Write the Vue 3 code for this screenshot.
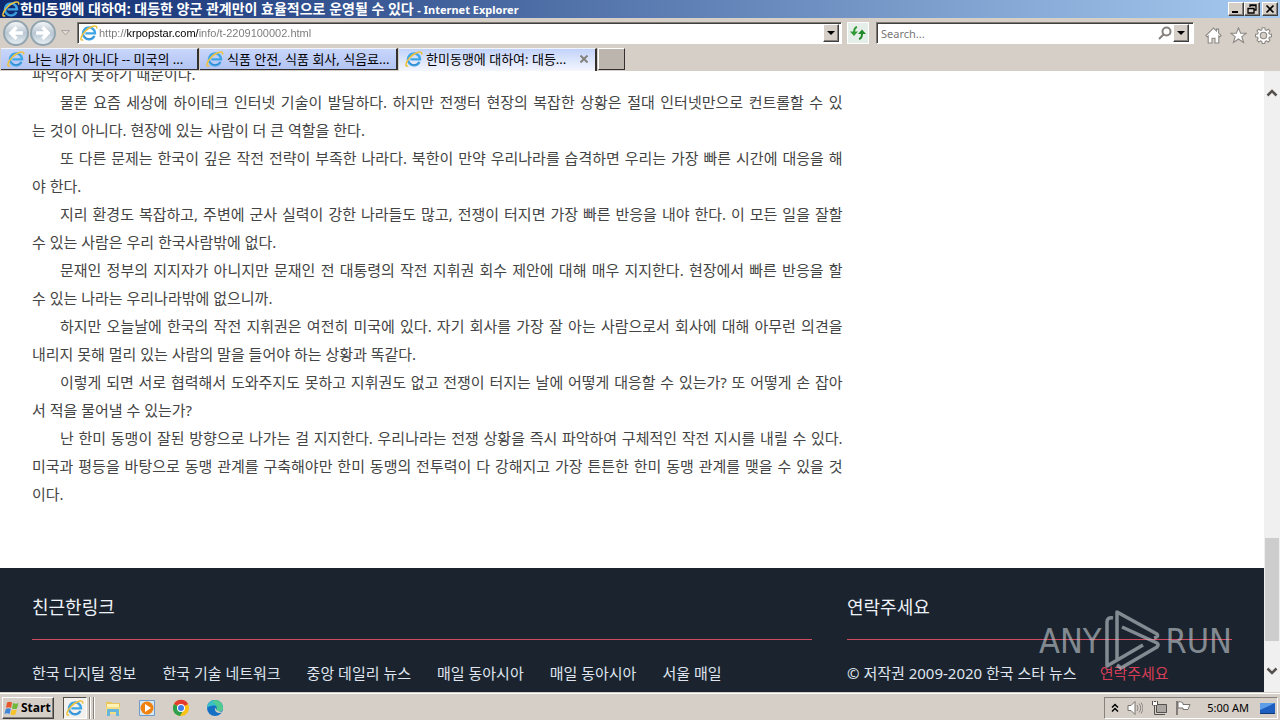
<script setup>
import { ref } from 'vue'

const address = ref('http://krpopstar.com/info/t-2209100002.html')
const query = ref('')

const tabs = [
  { label: '나는 내가 아니다 -- 미국의 ...', active: false },
  { label: '식품 안전, 식품 회사, 식음료...', active: false },
  { label: '한미동맹에 대하여: 대등...', active: true },
]

const paragraphs = [
  ['물론 요즘 세상에 하이테크 인터넷 기술이 발달하다. 하지만 전쟁터 현장의 복잡한 상황은 절대 인터넷만으로 컨트롤할 수 있', '는 것이 아니다. 현장에 있는 사람이 더 큰 역할을 한다.'],
  ['또 다른 문제는 한국이 깊은 작전 전략이 부족한 나라다. 북한이 만약 우리나라를 습격하면 우리는 가장 빠른 시간에 대응을 해', '야 한다.'],
  ['지리 환경도 복잡하고, 주변에 군사 실력이 강한 나라들도 많고, 전쟁이 터지면 가장 빠른 반응을 내야 한다. 이 모든 일을 잘할', '수 있는 사람은 우리 한국사람밖에 없다.'],
  ['문재인 정부의 지지자가 아니지만 문재인 전 대통령의 작전 지휘권 회수 제안에 대해 매우 지지한다. 현장에서 빠른 반응을 할', '수 있는 나라는 우리나라밖에 없으니까.'],
  ['하지만 오늘날에 한국의 작전 지휘권은 여전히 미국에 있다. 자기 회사를 가장 잘 아는 사람으로서 회사에 대해 아무런 의견을', '내리지 못해 멀리 있는 사람의 말을 들어야 하는 상황과 똑같다.'],
  ['이렇게 되면 서로 협력해서 도와주지도 못하고 지휘권도 없고 전쟁이 터지는 날에 어떻게 대응할 수 있는가? 또 어떻게 손 잡아', '서 적을 물어낼 수 있는가?'],
  ['난 한미 동맹이 잘된 방향으로 나가는 걸 지지한다. 우리나라는 전쟁 상황을 즉시 파악하여 구체적인 작전 지시를 내릴 수 있다.', '미국과 평등을 바탕으로 동맹 관계를 구축해야만 한미 동맹의 전투력이 다 강해지고 가장 튼튼한 한미 동맹 관계를 맺을 수 있을 것', '이다.'],
]

const links = ['한국 디지털 정보', '한국 기술 네트워크', '중앙 데일리 뉴스', '매일 동아시아', '매일 동아시아', '서울 매일']
</script>

<template>
  <div class="screen">
    <svg class="defs" aria-hidden="true">
      <symbol id="ie" viewBox="0 0 18 18">
        <path d="M14.400 12A6 6 0 1 1 15 9.400H5.400" fill="none" stroke="#3fa6e6" stroke-width="2.400" />
        <path d="M14.300 11.800A5.700 5.700 0 0 1 4 11.500" fill="none" stroke="#2f7cc4" stroke-width=".8" />
        <path d="M3.200 15.800C-.6 17.400.6 12 5 7.400S17.800-.8 16.600 4.600" fill="none" stroke="#eec23e" stroke-width="1.500" />
      </symbol>
    </svg>

    <header class="titlebar">
      <svg class="ie"><use href="#ie" /></svg>
      <h1>한미동맹에 대하여: 대등한 양군 관계만이 효율적으로 운영될 수 있다 <span>- Internet Explorer</span></h1>
      <div class="winbtns">
        <button aria-label="Minimize"><svg viewBox="0 0 12 10"><path d="M2 8h6" stroke="#000" stroke-width="2" /></svg></button>
        <button aria-label="Restore"><svg viewBox="0 0 12 10"><path d="M4 3V1h6v5H8M4 1.500h6M2 4.500h6V9H2zM2 4.500h6" fill="none" stroke="#000" stroke-width="1.300" /></svg></button>
        <button class="close" aria-label="Close"><svg viewBox="0 0 12 10"><path d="M2.500 1.500l7 7M9.500 1.500l-7 7" stroke="#000" stroke-width="1.700" /></svg></button>
      </div>
    </header>

    <nav class="navbar">
      <div class="history">
        <button aria-label="Back"><svg viewBox="0 0 14 14"><path d="M13 7H3M7.500 2L2.500 7l5 5" /></svg></button>
        <button aria-label="Forward"><svg viewBox="0 0 14 14"><path d="M1 7h10M6.500 2l5 5-5 5" /></svg></button>
        <svg class="recent" viewBox="0 0 9 6"><path d="M.5.5h8l-4 4.500z" fill="#ded9d4" stroke="#aaa5a0" /></svg>
      </div>
      <div class="field address">
        <svg class="ie"><use href="#ie" /></svg>
        <input v-model="address" aria-label="Address" spellcheck="false">
        <button class="drop" aria-label="Show address list"><svg viewBox="0 0 8 4"><path d="M0 0h8L4 4z" /></svg></button>
      </div>
      <button class="refresh" aria-label="Refresh">
        <svg viewBox="0 0 16 14"><path d="M7 1C4.500 1.500 4 3 4 7" fill="none" stroke="#2f9a32" stroke-width="2" /><path d="M0 5.500h8L4 10z" fill="#2f9a32" /><path d="M9 13c2.500-.5 3-2 3-5" fill="none" stroke="#1f8a26" stroke-width="2" /><path d="M8 8h8l-4-4.500z" fill="#1f8a26" /></svg>
      </button>
      <div class="field search">
        <input v-model="query" aria-label="Search" placeholder="Search...">
        <svg class="lens" viewBox="0 0 14 14"><circle cx="8.500" cy="5.500" r="4" /><path d="M5.500 8.500L1 13" /></svg>
        <button class="drop" aria-label="Search options"><svg viewBox="0 0 8 4"><path d="M0 0h8L4 4z" /></svg></button>
      </div>
      <div class="tools">
        <button aria-label="Home"><svg viewBox="0 0 16 16"><path d="M8 1L.8 8l1.200 1.200 1-.9V15h3.600v-4.500h2.800V15H13V8.300l1 .9L15.200 8l-2.400-2.300V2h-2v1.800z" /></svg></button>
        <button aria-label="Favorites"><svg viewBox="0 0 16 16"><path d="M8 .8l2 5h5.300l-4.200 3.300 1.600 5.400L8 11.300l-4.700 3.200 1.600-5.400L.7 5.800H6z" /></svg></button>
        <button aria-label="Tools"><svg viewBox="0 0 16 16"><path d="M6.800.7h2.400l.4 2 1.200.5 1.700-1.100 1.600 1.600L13 5.400l.5 1.200 2 .3v2.300l-2 .4-.5 1.200 1.100 1.700-1.600 1.600-1.700-1.100-1.200.5-.4 2H6.800l-.4-2-1.200-.5-1.700 1.100-1.600-1.600L3 10.800l-.5-1.200-2-.4V6.900l2-.3L3 5.400 1.900 3.700l1.600-1.600 1.700 1.100 1.200-.5z" /><circle cx="8" cy="8" r="3" fill="#d6cfc8" /></svg></button>
      </div>
    </nav>

    <div class="tabs" role="tablist">
      <button v-for="tab in tabs" :key="tab.label" role="tab" class="tab" :class="{ active: tab.active }" :aria-selected="tab.active">
        <svg class="ie"><use href="#ie" /></svg>
        <span class="label">{{ tab.label }}</span>
        <svg v-if="tab.active" class="x" viewBox="0 0 8 8"><path d="M.5.5l7 7M7.500.5l-7 7" /></svg>
      </button>
      <button class="newtab" aria-label="New tab"></button>
    </div>

    <div class="viewport">
      <div class="page">
        <article>
          <p class="tail">파악하지 못하기 때문이다.</p>
          <p v-for="(lines, i) in paragraphs" :key="i">
            <span v-for="line in lines" :key="line" class="line">{{ line }}</span>
          </p>
        </article>
        <footer>
          <section>
            <h2>친근한링크</h2>
            <div class="rule"></div>
            <div class="row links"><a v-for="(link, i) in links" :key="i" href="#">{{ link }}</a></div>
          </section>
          <section>
            <h2>연락주세요</h2>
            <div class="rule"></div>
            <div class="row contact"><span>© 저작권 2009-2020 한국 스타 뉴스</span><a href="#">연락주세요</a></div>
          </section>
        </footer>
      </div>
      <div class="scrollbar" aria-hidden="true">
        <svg viewBox="0 0 12 8"><path d="M1.500 6.500L6 2l4.500 4.500" /></svg>
        <div class="track"><div class="thumb"></div></div>
        <svg viewBox="0 0 12 8"><path d="M1.500 1.500L6 6l4.500-4.500" /></svg>
      </div>
      <div class="watermark">
        <span>ANY</span>
        <svg viewBox="0 0 56 64"><path d="M12 50V3L52 25q2 3-3 4M17 18l35 16q2 2 0 4L16 59l-4-3M8 9Q2 8 2 13V57L38 36" fill="none" stroke="currentColor" stroke-width="3.500" stroke-linejoin="round" /></svg>
        <span>RUN</span>
      </div>
    </div>

    <div class="taskbar">
      <button class="start">
        <svg viewBox="0 0 16 16"><path d="M3 2.500q3-1.500 5 0L7 8Q4.500 6.500 2 8z" fill="#e8572a" /><path d="M9 3q3 1.500 5.500 0L13 8.500q-2.500 1-5 0z" fill="#72b83c" /><path d="M1.800 9q2.600-1.300 5 0L5.500 14Q3 12.500.5 14z" fill="#3d86d8" /><path d="M7.800 9.500q2.500 1 5 0L11.500 14.500q-2.500 1.300-5 0z" fill="#f6c32c" /></svg>
        Start
      </button>
      <div class="running">
        <button aria-label="Internet Explorer"><svg class="ie"><use href="#ie" /></svg></button><i></i><i></i>
      </div>
      <div class="pins">
        <button aria-label="File Explorer"><svg viewBox="0 0 18 18"><path d="M2 3h5l1 1h8v11H2z" fill="#e9c65b" /><path d="M3 5h12v3H3z" fill="#fff3b8" /><path d="M2 8h14v7H2z" fill="#f5dc86" /><path d="M3 17v-6q0-1 1-1h10q1 0 1 1v6h-3v-4H6v4z" fill="#67b7dc" /></svg></button>
        <button aria-label="Media Player"><svg viewBox="0 0 18 18"><path d="M1.500 1.500h15v15h-15z" fill="#d5e6f6" stroke="#6d9ccb" /><circle cx="9" cy="9" r="6.500" fill="#f0820f" /><path d="M7 5l6 4-6 4z" fill="#fff" /></svg></button>
        <button aria-label="Chrome"><svg viewBox="0 0 18 18"><circle cx="9" cy="9" r="8" fill="#fbc116" /><path d="M9 9L2 5a8 8 0 0 1 14 0z" fill="#e33b2e" /><path d="M9 9L2 5a8 8 0 0 0 6 12l4-7z" fill="#2da04e" /><circle cx="9" cy="9" r="4" fill="#fff" /><circle cx="9" cy="9" r="3" fill="#3f7de8" /></svg></button>
        <button aria-label="Edge"><svg viewBox="0 0 18 18"><circle cx="9" cy="9" r="8" fill="#1570c4" /><path d="M1 9a8 8 0 0 1 16 0q0 3.500-4 3.500-3 0-2.500-2Q12 6.500 8 6.500 3 6.500 1 9z" fill="#39bfc4" /><path d="M9 1a8 8 0 0 1 8 8q0 3.500-4 3.500-3 0-2.500-2Q12 5 6 3z" fill="#5bcf7c" opacity=".7" /><path d="M9.500 8.500q-1.500 3 1.500 5 3 1.200 5.500-.8-3 .3-4.500-.7-2.500-1-2.500-3.500z" fill="#d6cfc8" /></svg></button>
      </div>
      <div class="tray">
        <svg class="chev" viewBox="0 0 8 10"><path d="M1 4.500l3-3 3 3M1 8.500l3-3 3 3" fill="none" stroke="#000" stroke-width="1.500" /></svg>
        <svg viewBox="0 0 16 16"><path d="M1 5.500h3l4-4v13l-4-4H1z" fill="#fff" stroke="#77736f" /><path d="M10 5q2 3 0 6M12 3.500q3.500 4.500 0 9M14 2.500q4 5.500 0 11" fill="none" stroke="#8a8682" /></svg>
        <svg viewBox="0 0 16 16"><path d="M5.500 4.500h10v8h-10zM8 14.500h6" fill="#aaa6a2" stroke="#55514d" /><path d="M1.500 1v4h5V1M3.500 1v3M4.500 1v3M3.500 5v9.500h5" fill="none" stroke="#55514d" /><path d="M2 2h4v3H2z" fill="#fff" /></svg>
        <svg viewBox="0 0 16 16"><path d="M2 1v14" stroke="#66625e" stroke-width="1.500" /><path d="M3 2q3-1 5 1v1.500h7L13 9.500H8V8H3z" fill="#fff" stroke="#77736f" /></svg>
        <time>5:00 AM</time>
        <svg class="desk" viewBox="0 0 16 14"><path d="M1 2h15v10H1z" fill="#1d5fc0" /><path d="M1 2h15L1 9z" fill="#5e9ee8" /><path d="M1 12h15v1H1z" fill="#123a78" /></svg>
      </div>
    </div>
  </div>
</template>

<style>
html, body { margin: 0; overflow: hidden; }
</style>

<style scoped>
.screen { display: flex; flex-direction: column; height: 100vh; overflow: hidden; background: #d6cfc8; color: #000; font-family: "Noto Sans", "Noto Sans CJK KR", sans-serif; font-size: 13px; }
* { box-sizing: border-box; }
button { padding: 0; border: 0; background: none; font: inherit; color: inherit; }
svg { display: block; flex: none; }
.defs { position: absolute; width: 0; height: 0; }
.ie { width: 18px; height: 18px; }

.titlebar { display: flex; align-items: center; height: 18px; padding: 0 2px; background: linear-gradient(90deg, #0d2a70, #a6caf0); flex: none; }
h1 { flex: 1; margin: 0; overflow: hidden; white-space: nowrap; color: #fff; font-size: 14px; line-height: 18px; font-weight: 700; }
h1 span { font-size: 11px; font-family: "Noto Sans", sans-serif; }
.winbtns { display: flex; }
.winbtns button, .drop { border: 1px solid; border-color: #fff #404040 #404040 #fff; background: #d6cfc8; box-shadow: inset -1px -1px #86817c; }
.winbtns button { width: 16px; height: 14px; display: grid; place-items: center; }
.winbtns svg { width: 12px; height: 10px; }
.winbtns .close { margin-left: 2px; }

.navbar { display: flex; align-items: center; height: 30px; padding: 0 8px 0 3px; flex: none; }
.history { display: flex; align-items: center; gap: 1px; width: 74px; flex: none; }
.history button { width: 26px; height: 26px; border: 2px solid #93a6b0; border-radius: 50%; background: linear-gradient(#f4f6f8, #b8c6d2 50%, #e4edf2); display: grid; place-items: center; }
.history button svg { width: 16px; height: 16px; fill: none; stroke: #fff; stroke-width: 3; }
.recent { width: 9px; height: 6px; margin-left: 4px; }
.field { display: flex; align-items: center; height: 22px; border: 1px solid; border-color: #807a74 #fff #fff #807a74; background: #fff; box-shadow: inset 1px 1px #404040; padding: 1px 2px; min-width: 0; }
.field input { flex: 1; min-width: 0; border: 0; padding: 0; outline: 0; background: none; font: 11px "Noto Sans", sans-serif; height: 18px; color: #777; }
.field input::placeholder { color: #777; opacity: 1; }
.address { flex: 765 1 765px; }
.field.address input { margin-left: 1px; font-family: "Liberation Sans", sans-serif; color: transparent; background: linear-gradient(90deg, #777 28px, #000 28px, #000 100px, #777 100px); background-clip: text; -webkit-background-clip: text; }
.drop { width: 16px; height: 18px; display: grid; place-items: center; }
.drop svg { width: 8px; height: 4px; }
.refresh { width: 22px; height: 22px; margin: 0 7px 0 5px; border: 1px solid #fff; background: #e6eeea; display: grid; place-items: center; flex: none; }
.refresh svg { width: 16px; height: 14px; }
.search { flex: 318 1 318px; }
.field.search { padding: 1px 4px; }
.lens { width: 14px; height: 14px; margin-right: 1px; fill: none; stroke: #86817c; stroke-width: 2; }
.tools { display: flex; gap: 8px; margin: 4px 0 0 11px; }
.tools svg { width: 17px; height: 17px; fill: #fff; stroke: #8b8782; }

.tabs { display: flex; height: 23px; padding-left: 1px; gap: 1px; flex: none; }
.tab { display: flex; align-items: center; width: 198px; height: 22px; padding: 0 6px 1px; gap: 3px; border-right: 2px solid #33302d; border-bottom: 1px solid #33302d; border-top: 1px solid #f2f4ff; background: linear-gradient(#c8d6fb, #b2c4f3); text-align: left; }
.tab .label { flex: 1; white-space: nowrap; overflow: hidden; line-height: 20px; }
.tab.active { height: 23px; padding-bottom: 2px; border-bottom: 0; background: linear-gradient(#c2d3fa, #f4f6fd); }
.x { width: 8px; height: 8px; stroke: #86817c; stroke-width: 2; margin-right: 1px; }
.newtab { width: 27px; height: 22px; border: 1px solid; border-color: #fff #33302d #33302d #fff; background: #bcb5ad; }

.viewport { position: relative; display: flex; flex: 1; min-height: 0; overflow: hidden; background: #fff; }
.page { flex: 1; min-width: 0; overflow: hidden; color: #444; font-size: 15px; }
article { width: 68%; margin-top: -11px; padding: 0 17px 60px 32px; }
p { margin: 0; line-height: 28px; text-indent: 28px; }
.tail { text-indent: 0; }
.line { display: block; text-align-last: justify; white-space: nowrap; }
.line + .line { text-indent: 0; }
.line:last-child { text-align-last: left; }
footer { display: grid; grid-template-columns: 780fr 385fr; gap: 35px; height: 160px; padding: 24px 32px 0; background: #1b242e; color: #dfe4ee; }
h2 { margin: 0 0 16px; font-size: 18px; line-height: 31px; font-weight: 400; color: #eef1f8; }
.rule { height: 1px; background: #d04a60; }
.row { display: flex; margin-top: 19px; line-height: 28px; white-space: nowrap; }
.links { gap: 26px; }
.contact { gap: 23px; }
a { color: inherit; text-decoration: none; }
.contact a { color: #d43d57; }

.scrollbar { display: flex; flex-direction: column; align-items: center; width: 16px; padding: 18px 0 17px; background: #f0f0f0; }
.scrollbar svg { width: 12px; height: 8px; fill: none; stroke: #55514f; stroke-width: 2.500; }
.track { flex: 1; align-self: stretch; display: flex; flex-direction: column; justify-content: flex-end; padding: 0 1px 26px; }
.thumb { height: 19%; background: #cdcdcd; }
.watermark { position: absolute; right: 48px; bottom: 19px; display: flex; align-items: center; gap: 4px; height: 64px; color: rgba(200, 207, 214, .6); font: 34px/64px "DejaVu Sans Condensed", sans-serif; pointer-events: none; }
.watermark svg { width: 56px; height: 64px; }

.taskbar { display: flex; align-items: center; height: 28px; padding: 2px 2px 0; border-top: 1px solid #d6cfc8; box-shadow: inset 0 1px #fff; flex: none; }
.start { display: flex; align-items: center; gap: 1px; width: 52px; height: 22px; padding-left: 1px; border: 1px solid; border-color: #fff #404040 #404040 #fff; box-shadow: inset -1px -1px #86817c; font: 700 12px "Open Sans", sans-serif; }
.start svg { width: 16px; height: 16px; }
.running { display: flex; gap: 2px; height: 22px; margin-left: 9px; }
.running button { width: 24px; border: 1px solid; border-color: #55514d #fff #fff #55514d; background: #f3f1ee; display: grid; place-items: center; }
.running i { width: 2px; border-right: 1px solid #fff; border-left: 1px solid #86817c; }
.pins { display: flex; gap: 16px; margin-left: 9px; }
.pins svg { width: 18px; height: 18px; }
.tray { display: flex; align-items: center; gap: 8px; height: 22px; margin-left: auto; padding: 0 2px 0 6px; border: 1px solid; border-color: #86817c #fff #fff #86817c; font-size: 11px; }
.tray svg { width: 16px; height: 16px; }
.tray .chev { width: 8px; height: 10px; }
.tray time { margin: 0 2px 0 8px; }
</style>
